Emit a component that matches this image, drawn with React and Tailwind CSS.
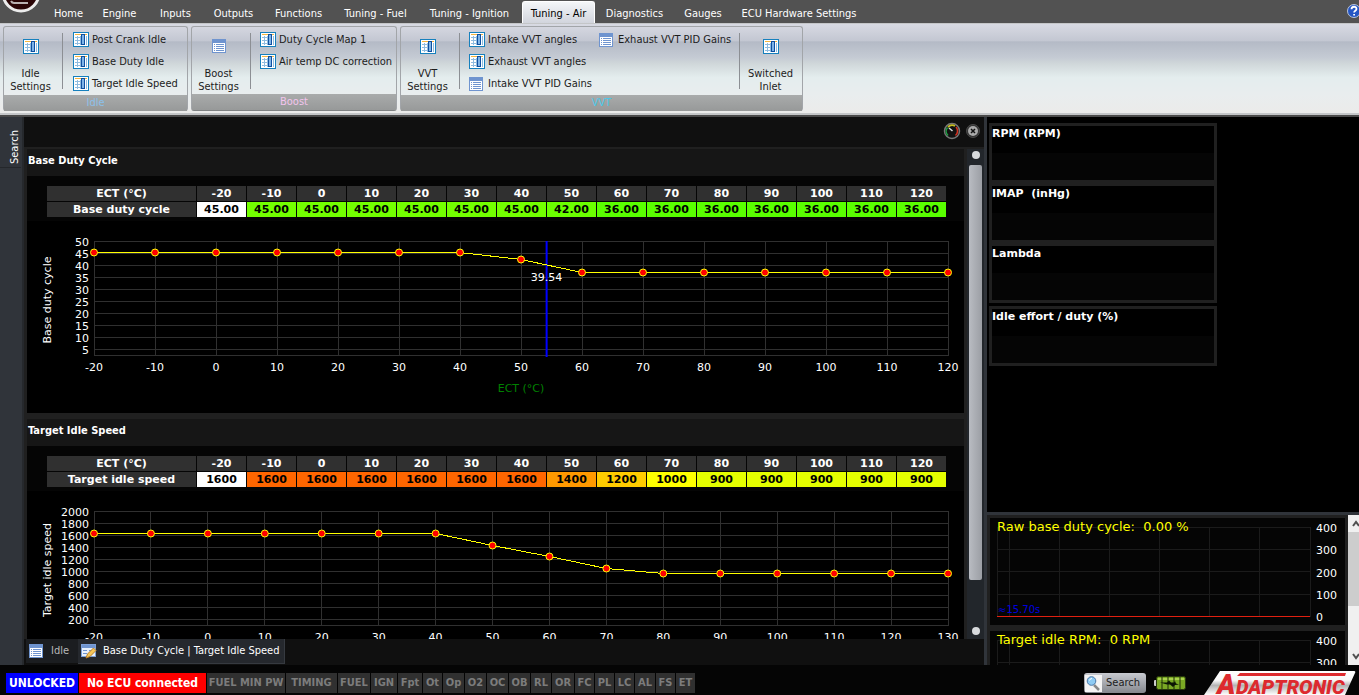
import React, { useState } from 'react';

const TABS = [
    { name: 'Home', width: 'w-[47px]' },
    { name: 'Engine', width: 'w-[55px]' },
    { name: 'Inputs', width: 'w-[57px]' },
    { name: 'Outputs', width: 'w-[59px]' },
    { name: 'Functions', width: 'w-[71px]' },
    { name: 'Tuning - Fuel', width: 'w-[83px]' },
    { name: 'Tuning - Ignition', width: 'w-[105px]' },
    { name: 'Tuning - Air', width: 'w-[73px]' },
    { name: 'Diagnostics', width: 'w-[79px]' },
    { name: 'Gauges', width: 'w-[58px]' },
    { name: 'ECU Hardware Settings', width: 'w-[134px]' },
];

const STATUS = [
    { name: 'FUEL MIN PW', width: 'w-[78px]' },
    { name: 'TIMING', width: 'w-[51px]' },
    { name: 'FUEL', width: 'w-[32px]' },
    { name: 'IGN', width: 'w-[26px]' },
    { name: 'Fpt', width: 'w-[24px]' },
    { name: 'Ot', width: 'w-[19px]' },
    { name: 'Op', width: 'w-[21px]' },
    { name: 'O2', width: 'w-[21px]' },
    { name: 'OC', width: 'w-[21px]' },
    { name: 'OB', width: 'w-[21px]' },
    { name: 'RL', width: 'w-[20px]' },
    { name: 'OR', width: 'w-[22px]' },
    { name: 'FC', width: 'w-[19px]' },
    { name: 'PL', width: 'w-[19px]' },
    { name: 'LC', width: 'w-[19px]' },
    { name: 'AL', width: 'w-[20px]' },
    { name: 'FS', width: 'w-[19px]' },
    { name: 'ET', width: 'w-[19px]' },
];

const TEMPS = [-20, -10, 0, 10, 20, 30, 40, 50, 60, 70, 80, 90, 100, 110, 120];
const DUTY = [45, 45, 45, 45, 45, 45, 45, 42, 36, 36, 36, 36, 36, 36, 36];
const SPEED = [1600, 1600, 1600, 1600, 1600, 1600, 1600, 1400, 1200, 1000, 900, 900, 900, 900, 900];

const CELL_COLORS = {
    45: 'bg-[#73ff00]',
    42: 'bg-[#6bff00]',
    36: 'bg-[#59ff00]',
    1600: 'bg-[#ff6600]',
    1400: 'bg-[#ff9900]',
    1200: 'bg-[#ffcc00]',
    1000: 'bg-[#ffff00]',
    900: 'bg-[#e5ff00]',
};

const TableIcon = () => (
    <svg width="16" height="16" viewBox="0 0 16 16" className="shrink-0" aria-hidden="true">
        <rect x="0.5" y="0.5" width="15" height="14" fill="#fff" stroke="#1680bd" />
        <path d="M2 2.5h12" stroke="#f5b53d" />
        <path d="M2 5.5h6M2 8.5h6M2 11.5h6M4.5 4v9M7.5 4v9M13.5 4v9" stroke="#8fbce0" />
        <rect x="8.5" y="2.5" width="3" height="10" fill="#7fb4e6" stroke="#0f4fa0" />
    </svg>
);

const ListIcon = () => (
    <svg width="14" height="14" viewBox="0 0 14 14" className="shrink-0" aria-hidden="true">
        <rect x="0.5" y="0.5" width="13" height="13" fill="#fff" stroke="#6f94cf" />
        <rect x="1" y="1" width="12" height="3" fill="#6f94cf" />
        <path d="M2 5.5h1M2 7.5h1M2 9.5h1M2 11.5h1M4 5.5h8M4 7.5h8M4 9.5h8M4 11.5h8" stroke="#6f94cf" />
    </svg>
);

const EditIcon = () => (
    <svg width="16" height="16" viewBox="0 0 16 16" className="shrink-0" aria-hidden="true">
        <rect x="0.5" y="1.5" width="14" height="12" fill="#e8f0fb" stroke="#7da0d8" />
        <rect x="1" y="2" width="13" height="3" fill="#6f94cf" />
        <path d="M2 7.5h4M2 10.5h4M8 7.5h4" stroke="#6f94cf" />
        <path d="M5 15l1.5-4 6-6 2.5 2.5-6 6z" fill="#f4c558" stroke="#b97f28" />
    </svg>
);

const LogoButton = () => (
    <svg width="42" height="16" viewBox="0 0 42 16" aria-hidden="true">
        <circle cx="21" cy="-7" r="18" fill="#2a0506" stroke="#ececec" strokeWidth="3" />
        <path d="M11 1q1 2 3 2h14" fill="none" stroke="#b9b0b0" strokeWidth="2" />
    </svg>
);

const HelpIcon = () => (
    <svg width="16" height="16" viewBox="0 0 16 16" aria-hidden="true">
        <circle cx="8" cy="8" r="6.5" fill="#2456c4" stroke="#b8c4dc" />
        <path d="M5.5 6.2c0-3.2 5-3.2 5-.3 0 1.8-2.4 1.8-2.4 3.6M8.1 11v1.6" fill="none" stroke="#fff" strokeWidth="1.8" />
    </svg>
);

const GaugeIcon = () => (
    <svg width="18" height="18" viewBox="0 0 18 18" aria-hidden="true">
        <circle cx="9" cy="9" r="7.5" fill="#111" stroke="#777" strokeWidth="1.5" />
        <path d="M5 13.5a6 6 0 0 1-.5-8" fill="none" stroke="#1fa045" strokeWidth="1.5" />
        <path d="M5 5a6 6 0 0 1 7-1" fill="none" stroke="#c9c020" strokeWidth="1.8" />
        <path d="M13 5a6 6 0 0 1-.5 8.5" fill="none" stroke="#d33020" strokeWidth="1.5" />
        <path d="M9.5 9L6 6" stroke="#ddd" strokeWidth="1.5" />
    </svg>
);

const CloseIcon = () => (
    <svg width="16" height="16" viewBox="0 0 16 16" aria-hidden="true">
        <circle cx="8" cy="8" r="6.5" fill="#333" stroke="#4a4a4a" />
        <circle cx="8" cy="8" r="5" fill="#aaa" />
        <path d="M6 6l4 4M10 6l-4 4" stroke="#111" strokeWidth="1.5" />
    </svg>
);

const SearchIcon = () => (
    <svg width="17" height="17" viewBox="0 0 17 17" aria-hidden="true">
        <rect width="17" height="17" fill="#f4f4f4" />
        <path d="M9 10l5 5" stroke="#888" strokeWidth="2.5" />
        <circle cx="6.5" cy="6" r="4.3" fill="#8ecbf3" stroke="#4a78a8" />
        <path d="M4.5 5.5a2.5 2.5 0 0 1 2.5-2" fill="none" stroke="#fff" />
    </svg>
);

const BatteryIcon = () => (
    <svg width="33" height="16" viewBox="0 0 33 16" role="img" aria-label="Battery">
        <rect x="0" y="5" width="3" height="6" rx="1" fill="#ccc" />
        <rect x="2.5" y="1.5" width="29" height="13" rx="2" fill="#7aa824" stroke="#26360c" />
        <path d="M4 4h26" stroke="#a9d24e" strokeWidth="2" />
        <path d="M8 2v12M14 2v12M20 2v12M26 2v12" stroke="#1c2a08" />
        <path d="M6 7.5h7l2-2 2 2 3 0 1-1.5 1 2.5 3 1-4 .5-2 2-3-2.500-3 0z" fill="#0c1404" />
    </svg>
);

const BrandLogo = () => (
    <svg width="155" height="25" viewBox="0 0 155 25" className="block shrink-0" role="img" aria-label="Adaptronic">
        <defs>
            <linearGradient id="brand" x1="0" y1="0" x2="0" y2="1">
                <stop offset="0" stopColor="#fff" />
                <stop offset="0.4" stopColor="#f6f6f6" />
                <stop offset="0.6" stopColor="#b4b4b4" />
                <stop offset="1" stopColor="#fff" />
            </linearGradient>
        </defs>
        <path d="M16 1H150Q152 1 151 3L141 25H0z" fill="url(#brand)" />
        <g fill="#dd2a2e" fontFamily="Roboto, sans-serif" fontStyle="italic" fontWeight="900">
            <text x="13" y="24" fontSize="28">A</text>
            <text x="32" y="24" fontSize="20">DAPTRONIC</text>
        </g>
        <path d="M36 3H142L141 6H33z" fill="#dd2a2e" />
    </svg>
);

const SmallItem = ({ icon, label }) => (
    <button type="button" className="flex h-[22px] items-center gap-[3px] whitespace-nowrap text-[#1c1c1c]">
        <span className="flex w-4 justify-start">{icon === 'list' ? <ListIcon /> : <TableIcon />}</span>
        {label}
    </button>
);

const BigItem = ({ icon, lines }) => (
    <button type="button" className="mr-[5px] flex w-[53px] flex-col items-center pt-3 text-center leading-[13px] text-[#1c1c1c]">
        <span className="flex h-4">{icon === 'list' ? <ListIcon /> : <TableIcon />}</span>
        <span className="pt-3">
            {lines[0]}
            <br />
            {lines[1]}
        </span>
    </button>
);

const Divider = () => <span className="mt-[6px] h-14 w-px bg-[#8c8f94]" />;

const Group = ({ title, color, width, children }) => (
    <section className={`flex flex-col rounded-[3px] border border-[#a2a5a9] border-b-[#7f8283] ${width}`}>
        <div className="flex h-[68px]">{children}</div>
        <h2 className={`flex-1 bg-linear-to-b from-[#a9abab] to-[#979999] text-center leading-4 ${color}`}>{title}</h2>
    </section>
);

const DataTable = ({ label, values, decimals }) => (
    <table className="table-fixed border-separate border-spacing-0 text-center text-[11px] leading-[15px] font-bold">
        <thead>
            <tr>
                <th scope="row" className="h-4 w-[150px] border-r border-b border-[#050505] bg-[#303030] p-0">ECT (°C)</th>
                {TEMPS.map((t) => (
                    <th key={t} scope="col" className="h-4 w-[50px] border-r border-b border-[#050505] bg-[#303030] p-0">{t}</th>
                ))}
            </tr>
        </thead>
        <tbody className="text-black">
            <tr>
                <th scope="row" className="h-4 border-r border-b border-[#050505] bg-[#303030] p-0 text-white">{label}</th>
                {values.map((v, i) => (
                    <td key={i} className={`border-r border-b border-[#050505] p-0 ${i === 0 ? 'bg-white' : CELL_COLORS[v]}`}>
                        {v.toFixed(decimals)}
                    </td>
                ))}
            </tr>
        </tbody>
    </table>
);

// Grid rows are 12px apart, the trace is scaled over the full plot height
const LineChart = ({ label, values, max, step, xLabels, cursor }) => {
    const last = xLabels.length - 1;
    const pct = (i) => `${(i / last) * 100}%`;
    const yOf = (v) => Math.floor(((max - v) / max) * 114) + 0.5;
    const ticks = Array.from({ length: 10 }, (_, i) => max - i * step);
    const points = xLabels.map((_, i) => values[Math.min(i, values.length - 1)]);

    return (
        <div className="h-[192px] bg-black pt-5 pr-4 pl-[67px]">
            <svg className="block h-[115px] w-full overflow-visible text-[11px]" fill="#fff" role="img" aria-label={label}>
                <g stroke="#303030" shapeRendering="crispEdges">
                    {ticks.map((t, i) => (
                        <line key={t} x1="0" x2="100%" y1={i * 12 + 0.5} y2={i * 12 + 0.5} />
                    ))}
                    <line x1="0" x2="100%" y1="114.5" y2="114.5" />
                    {xLabels.map((x, i) => (
                        <line key={x} x1={pct(i)} x2={pct(i)} y1="0" y2="115" />
                    ))}
                </g>
                {ticks.map((t, i) => (
                    <text key={t} x="-5" y={i * 12 + 5} textAnchor="end">{t}</text>
                ))}
                {xLabels.map((x, i) => (
                    <text key={x} x={pct(i)} y="130" textAnchor="middle">{x}</text>
                ))}
                <text transform="rotate(-90)" x="-59" y="-43" textAnchor="middle">{label}</text>
                <text x="50%" y="151" textAnchor="middle" fill="#008000">ECT (°C)</text>
                {cursor && (
                    <line x1={cursor.at} x2={cursor.at} y1="0" y2="116" stroke="#0000ff" strokeWidth="2" />
                )}
                <g stroke="#ffff00" shapeRendering="crispEdges">
                    {points.slice(1).map((v, i) => (
                        <line key={i} x1={pct(i)} x2={pct(i + 1)} y1={yOf(points[i])} y2={yOf(v)} />
                    ))}
                </g>
                {points.map((v, i) => (
                    <circle key={i} cx={pct(i)} cy={yOf(v)} r="3.5" fill="#ff0000" stroke="#ffff00" />
                ))}
                {cursor && <text x={cursor.at} y="40" textAnchor="middle">{cursor.text}</text>}
            </svg>
        </div>
    );
};

const Panel = ({ title, table, chart }) => (
    <section className="mb-[6px] shrink-0">
        <h2 className="h-[27px] bg-[#161616] pl-px font-['DejaVu_Sans_Condensed','DejaVu_Sans',sans-serif] text-[11px] leading-6 font-bold">{title}</h2>
        <div className="h-[45px] bg-[#050505] pt-[10px] pl-5">{table}</div>
        {chart}
    </section>
);

const Gauge = ({ title }) => (
    <div className="h-[60px] w-[228px] border-[3px] border-[#202020] bg-linear-to-b from-black from-50% to-[#050505] to-50% text-[11px] leading-4 font-bold whitespace-pre">
        {title}
    </div>
);

const TraceChart = ({ title }) => (
    <div className="h-[113px] shrink-0 border-[3px] border-[#202020] bg-[#050505] pt-[9px] pr-[35px] pl-[7px]">
        <svg className="block h-[91px] w-full overflow-visible text-[11px]" fill="#fff" role="img" aria-label={title}>
            <g stroke="#1b1b1b" shapeRendering="crispEdges">
                {[0, 22, 44, 67, 89].map((y) => (
                    <line key={y} x1="0" x2="100%" y1={y + 0.5} y2={y + 0.5} />
                ))}
                {['0%', '4%', '20%', '36%', '52%', '68%', '84%', '100%'].map((x) => (
                    <line key={x} x1={x} x2={x} y1="0" y2="90" />
                ))}
            </g>
            <line x1="0" x2="100%" y1="89.5" y2="89.5" stroke="#e02010" />
            <text x="1" y="86" fill="#0000e0" className="text-[10px]">≈15.70s</text>
            <text x="0" y="4" fill="#ffff00" className="text-[13px] whitespace-pre">{title}</text>
            <svg x="100%" className="overflow-visible">
                {[400, 300, 200, 100, 0].map((v, i) => (
                    <text key={v} x="6" y={Math.round(i * 22.3) + 5}>{v}</text>
                ))}
            </svg>
        </svg>
    </div>
);

const App = () => {
    const [activeTab, setActiveTab] = useState('Tuning - Air');

    return (
        <div className="flex h-screen flex-col overflow-hidden bg-black font-['DejaVu_Sans',sans-serif] text-[11px] text-white">
            <header className="font-['DejaVu_Sans_Condensed','DejaVu_Sans',sans-serif]">
                <nav className="flex h-[23px] bg-[#525252]">
                    <button type="button" aria-label="Menu" className="flex w-[45px] items-start"><LogoButton /></button>
                    {TABS.map((tab) => (
                        <button
                            key={tab.name}
                            type="button"
                            onClick={() => setActiveTab(tab.name)}
                            className={`mt-px flex h-[22px] items-center justify-center pt-1 whitespace-nowrap ${tab.width} ${
                                activeTab === tab.name ? 'rounded-t-[3px] border-x border-t border-white bg-linear-to-b from-[#f4f6f8] to-[#d2d5dd] text-black' : ''
                            }`}
                        >
                            {tab.name}
                        </button>
                    ))}
                    <button type="button" aria-label="Help" className="mt-[3px] -mr-[3px] ml-auto h-4"><HelpIcon /></button>
                </nav>
                <div className="flex h-[92px] gap-[3px] border-t border-b-2 border-[#c4c6c8] bg-[linear-gradient(to_bottom,#d8dae3_0%,#c3c7d2_19%,#b4bac6_20%,#c5cbd4_38%,#cfd6d9_44%,#e4edee_60%,#e9edee_80%,#ebebea_100%)] px-[3px] pt-[2px] pb-[2px]">
                    <Group title="Idle" color="text-[#8cc0ea]" width="w-[185px]">
                        <BigItem lines={['Idle', 'Settings']} />
                        <Divider />
                        <div className="flex flex-col pt-[2px] pl-[10px]">
                            <SmallItem label="Post Crank Idle" />
                            <SmallItem label="Base Duty Idle" />
                            <SmallItem label="Target Idle Speed" />
                        </div>
                    </Group>
                    <Group title="Boost" color="text-[#f3c4ee]" width="w-[206px]">
                        <BigItem icon="list" lines={['Boost', 'Settings']} />
                        <Divider />
                        <div className="flex flex-col pt-[2px] pl-[9px]">
                            <SmallItem label="Duty Cycle Map 1" />
                            <SmallItem label="Air temp DC correction" />
                        </div>
                    </Group>
                    <Group title="VVT" color="text-[#4cc8e8]" width="w-[403px]">
                        <BigItem lines={['VVT', 'Settings']} />
                        <Divider />
                        <div className="flex w-[139px] flex-col pt-[2px] pl-[9px]">
                            <SmallItem label="Intake VVT angles" />
                            <SmallItem label="Exhaust VVT angles" />
                            <SmallItem icon="list" label="Intake VVT PID Gains" />
                        </div>
                        <div className="flex flex-1 flex-col pt-[2px]">
                            <SmallItem icon="list" label="Exhaust VVT PID Gains" />
                        </div>
                        <Divider />
                        <div className="flex pl-1">
                            <BigItem lines={['Switched', 'Inlet']} />
                        </div>
                    </Group>
                </div>
                <div className="h-[2px] bg-[#4a4a4a]" />
            </header>

            <div className="flex min-h-0 flex-1">
                <aside className="w-6 border-r-2 border-[#26292d] bg-[#30343a] font-['DejaVu_Sans_Condensed','DejaVu_Sans',sans-serif]">
                    <button type="button" className="h-[51px] w-[21px] rotate-180 border-t border-[#24272b] pr-2 pb-[11px] leading-[14px] [writing-mode:vertical-rl]">
                        Search
                    </button>
                </aside>

                <main className="flex min-w-0 flex-1 flex-col bg-[#101010]">
                    <div className="flex h-[30px] items-center justify-end gap-1 pr-[3px] pb-[2px]">
                        <button type="button" aria-label="Gauges"><GaugeIcon /></button>
                        <button type="button" aria-label="Close"><CloseIcon /></button>
                    </div>
                    <div className="flex min-h-0 flex-1 bg-[#202020] pt-[2px] pl-[3px]">
                        <div className="flex min-w-0 flex-1 flex-col overflow-hidden">
                            <Panel
                                title="Base Duty Cycle"
                                table={<DataTable label="Base duty cycle" values={DUTY} decimals={2} />}
                                chart={<LineChart label="Base duty cycle" values={DUTY} max={50} step={5} xLabels={TEMPS} cursor={{ at: '53%', text: '39.54' }} />}
                            />
                            <Panel
                                title="Target Idle Speed"
                                table={<DataTable label="Target idle speed" values={SPEED} decimals={0} />}
                                chart={<LineChart label="Target idle speed" values={SPEED} max={2000} step={200} xLabels={[...TEMPS, 130]} />}
                            />
                        </div>
                        <div className="ml-[3px] flex w-[17px] flex-col items-center bg-[#22262b] pt-[2px] pb-1">
                            <span className="mb-[6px] size-2 rounded-full bg-[#d8dadd]" />
                            <span className="w-[13px] flex-1 rounded-[2px] bg-linear-to-r from-[#b9bcc2] to-[#9b9ea4]" />
                            <span className="mt-[47px] size-2 rounded-full bg-[#d8dadd]" />
                        </div>
                    </div>
                    <div className="flex h-[26px] items-start pl-[2px] font-['DejaVu_Sans_Condensed','DejaVu_Sans',sans-serif]">
                        <button type="button" className="flex h-6 w-[52px] items-center gap-2 bg-[#1b1d20] pl-[3px] text-[#b8b8b8]">
                            <ListIcon />
                            Idle
                        </button>
                        <button type="button" className="flex h-[25px] items-center gap-[6px] border-r border-b border-[#363a40] bg-[#25282d] pr-[5px] pl-[3px] whitespace-nowrap">
                            <EditIcon />
                            Base Duty Cycle | Target Idle Speed
                        </button>
                    </div>
                </main>

                <div className="w-[3px] bg-[#30343a]" />

                <aside className="flex w-[372px] shrink-0 flex-col">
                    <div className="flex-1 pt-[6px] pl-[2px]">
                        <Gauge title="RPM (RPM)" />
                        <Gauge title="IMAP  (inHg)" />
                        <Gauge title="Lambda" />
                        <div className="pt-[3px]">
                            <Gauge title="Idle effort / duty (%)" />
                        </div>
                    </div>
                    <div className="h-[3px] bg-[#30343a]" />
                    <div className="flex h-[150px] overflow-hidden">
                        <div className="flex min-w-0 flex-1 flex-col bg-[#202020]">
                            <TraceChart title="Raw base duty cycle:  0.00 %" />
                            <TraceChart title="Target idle RPM:  0 RPM" />
                        </div>
                        <div className="flex w-[11px] flex-col items-center bg-[#f0f0f0]">
                            <svg width="11" height="17" viewBox="0 0 11 17" aria-hidden="true"><path d="M5 11l3-4 3 4" fill="none" stroke="#505050" strokeWidth="2" /></svg>
                            <span className="w-full flex-1 bg-[#cdcdcd]" />
                            <svg width="11" height="59" viewBox="0 0 11 59" aria-hidden="true"><path d="M5 48l3 4 3-4" fill="none" stroke="#505050" strokeWidth="2" /></svg>
                        </div>
                    </div>
                </aside>
            </div>

            <footer className="flex h-[30px] items-center bg-[#050505] pl-[6px] font-['DejaVu_Sans_Condensed','DejaVu_Sans',sans-serif] font-bold">
                <div className="flex gap-px pt-[6px] text-center leading-5 whitespace-nowrap">
                    <span className="w-[72px] bg-[#0000ff] text-[12px]">UNLOCKED</span>
                    <span className="w-[127px] bg-[#ff0000] text-[12px]">No ECU connected</span>
                    {STATUS.map((s) => (
                        <span key={s.name} className={`bg-[#303030] text-[#7c7c7c] ${s.width}`}>{s.name}</span>
                    ))}
                </div>
                <div className="ml-auto flex h-full items-center gap-2">
                    <button type="button" className="mt-[6px] flex h-5 w-[62px] items-center gap-1 rounded-[3px] bg-linear-to-b from-[#c8cad0] to-[#85888e] pl-px font-normal text-[#1c1c1c]">
                        <SearchIcon />
                        Search
                    </button>
                    <span className="mt-[6px]"><BatteryIcon /></span>
                    <span className="ml-[9px] self-end"><BrandLogo /></span>
                </div>
            </footer>
        </div>
    );
};

export default App;
